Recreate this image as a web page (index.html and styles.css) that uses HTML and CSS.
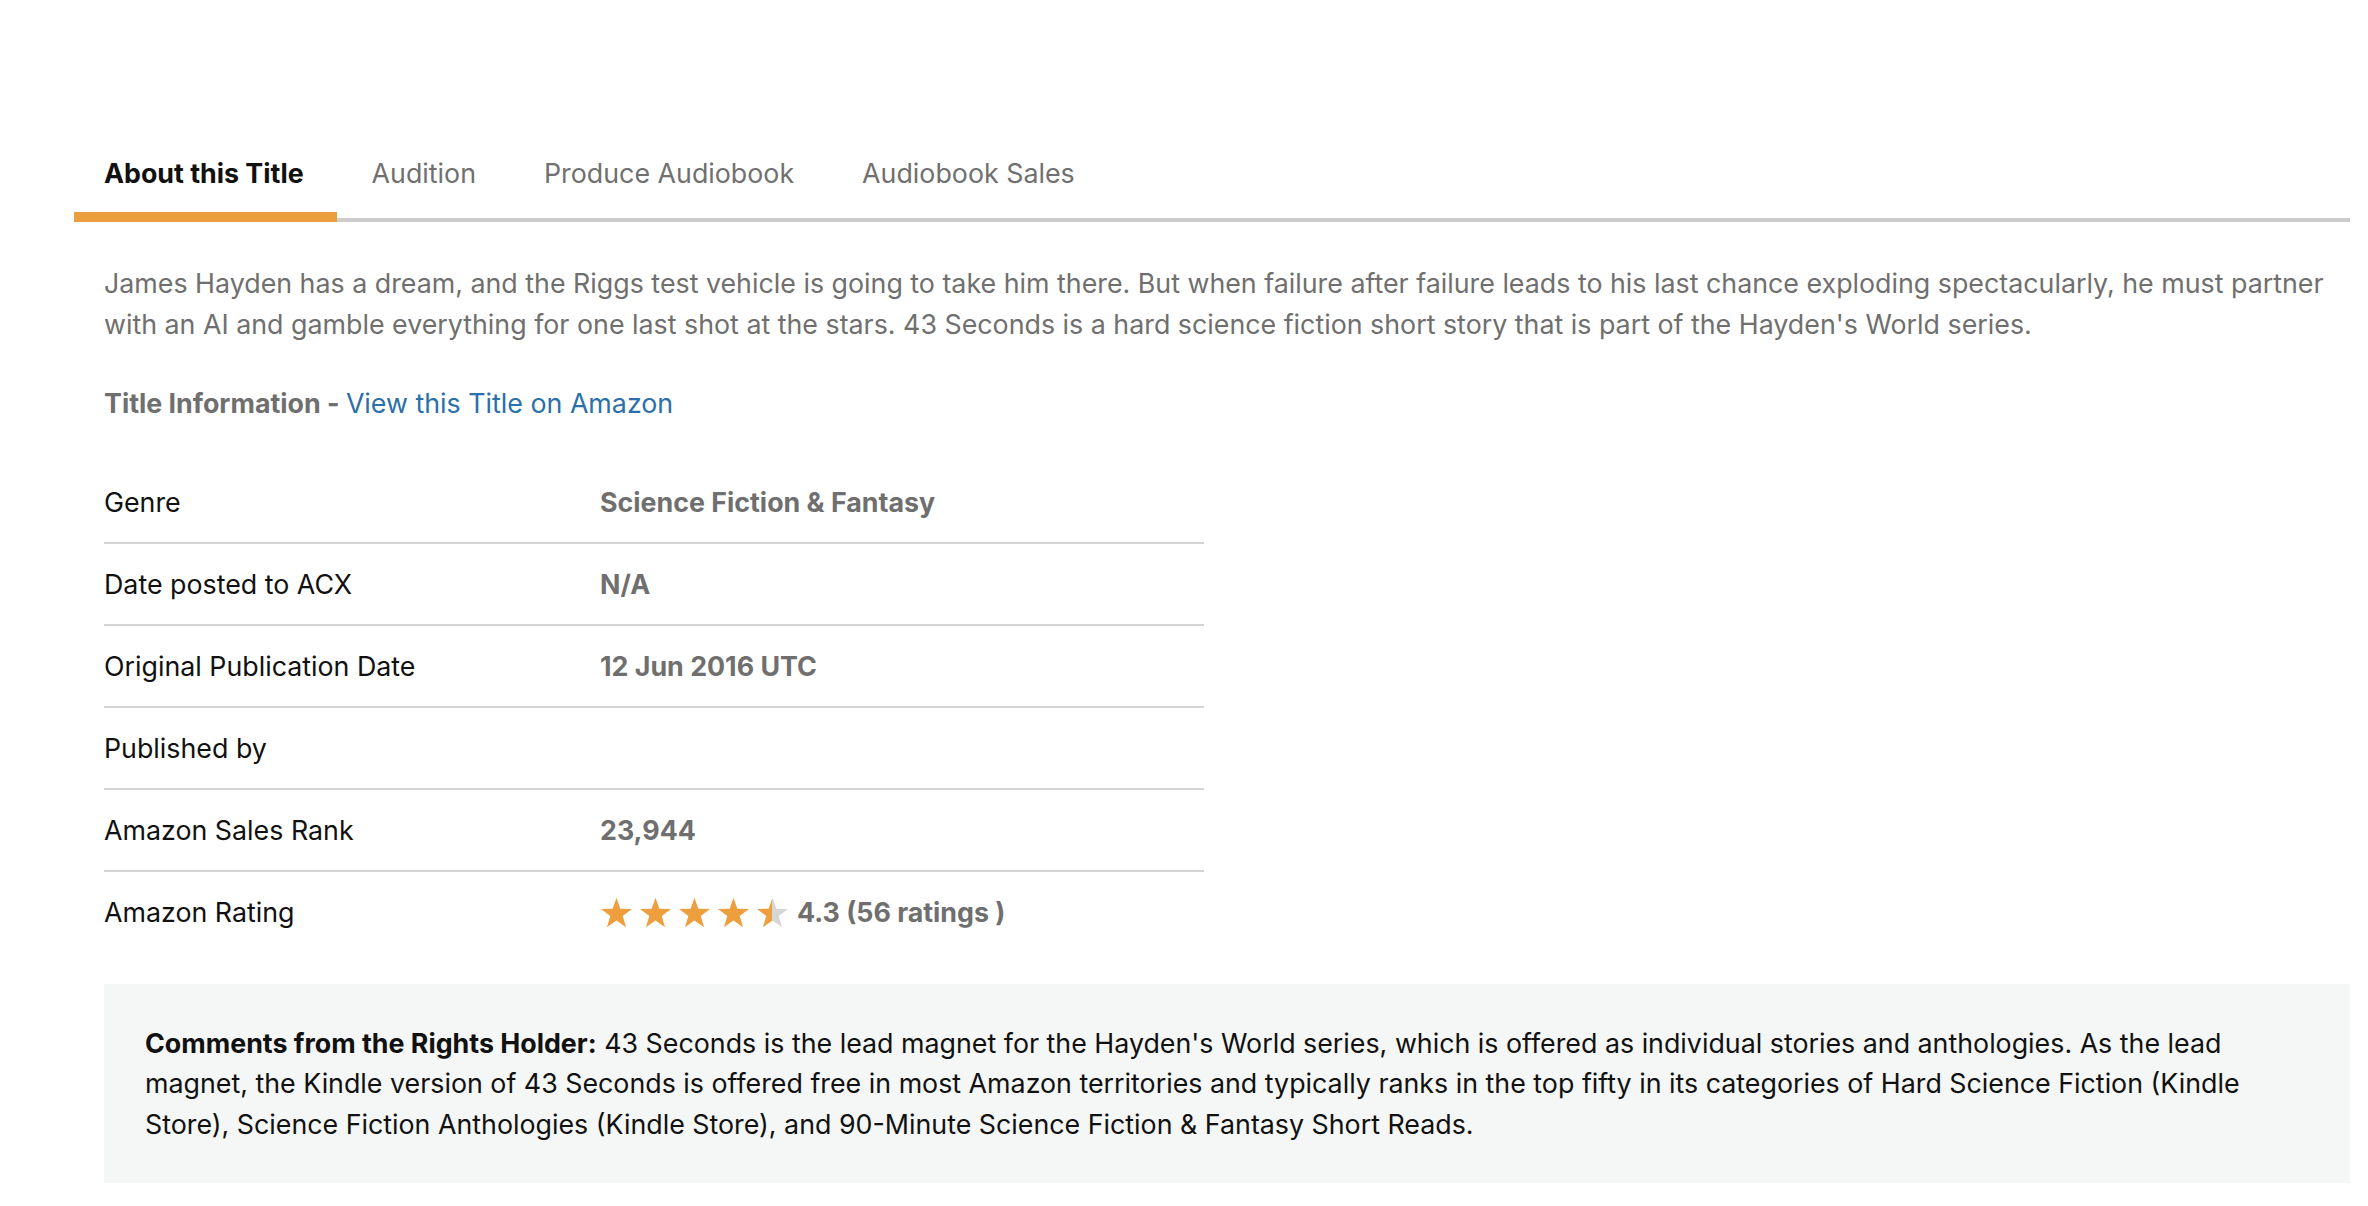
FILE: index.html
```html
<!DOCTYPE html>
<html lang="en">
<head>
<meta charset="utf-8">
<title>About this Title</title>
<link rel="stylesheet" href="styles.css">
</head>
<body>
<div class="page">
  <nav class="tabs">
    <a class="tab active" href="#">About this Title</a>
    <a class="tab" href="#">Audition</a>
    <a class="tab" href="#">Produce Audiobook</a>
    <a class="tab" href="#">Audiobook Sales</a>
  </nav>
  <div class="content">
    <p class="desc">James Hayden has a dream, and the Riggs test vehicle is going to take him there. But when failure after failure leads to his last chance exploding spectacularly, he must partner with an AI and gamble everything for one last shot at the stars. 43 Seconds is a hard science fiction short story that is part of the Hayden's World series.</p>
    <p class="info"><strong>Title Information - </strong><a href="#">View this Title on Amazon</a></p>
    <table class="details">
      <tr><td class="label">Genre</td><td class="value">Science Fiction &amp; Fantasy</td></tr>
      <tr><td class="label">Date posted to ACX</td><td class="value">N/A</td></tr>
      <tr><td class="label">Original Publication Date</td><td class="value">12 Jun 2016 UTC</td></tr>
      <tr><td class="label">Published by</td><td class="value"></td></tr>
      <tr><td class="label">Amazon Sales Rank</td><td class="value">23,944</td></tr>
      <tr><td class="label">Amazon Rating</td><td class="value">
        <div class="rating">
          <span class="stars">
            <svg class="star" viewBox="0 0 100 95"><polygon class="full" points="50,2 61.76,35.82 97.55,36.55 69.02,58.18 79.39,92.45 50,72 20.61,92.45 30.98,58.18 2.45,36.55 38.24,35.82"/></svg>
            <svg class="star" viewBox="0 0 100 95"><polygon class="full" points="50,2 61.76,35.82 97.55,36.55 69.02,58.18 79.39,92.45 50,72 20.61,92.45 30.98,58.18 2.45,36.55 38.24,35.82"/></svg>
            <svg class="star" viewBox="0 0 100 95"><polygon class="full" points="50,2 61.76,35.82 97.55,36.55 69.02,58.18 79.39,92.45 50,72 20.61,92.45 30.98,58.18 2.45,36.55 38.24,35.82"/></svg>
            <svg class="star" viewBox="0 0 100 95"><polygon class="full" points="50,2 61.76,35.82 97.55,36.55 69.02,58.18 79.39,92.45 50,72 20.61,92.45 30.98,58.18 2.45,36.55 38.24,35.82"/></svg>
            <svg class="star" viewBox="0 0 100 95"><defs><linearGradient id="half" x1="0" x2="1" y1="0" y2="0"><stop offset="0.5" stop-color="#ed9f3d"/><stop offset="0.5" stop-color="#d6d6d6"/></linearGradient></defs><polygon fill="url(#half)" points="50,2 61.76,35.82 97.55,36.55 69.02,58.18 79.39,92.45 50,72 20.61,92.45 30.98,58.18 2.45,36.55 38.24,35.82"/></svg>
          </span>
          <span class="score">4.3 (56 ratings )</span>
        </div>
      </td></tr>
    </table>
    <div class="comments"><p class="comments-text"><strong>Comments from the Rights Holder:</strong> 43 Seconds is the lead magnet for the Hayden's World series, which is offered as individual stories and anthologies. As the lead magnet, the Kindle version of 43 Seconds is offered free in most Amazon territories and typically ranks in the top fifty in its categories of Hard Science Fiction (Kindle Store), Science Fiction Anthologies (Kindle Store), and 90-Minute Science Fiction &amp; Fantasy Short Reads.</p></div>
  </div>
</div>
</body>
</html>
```

FILE: styles.css
```css
html, body {
  margin: 0;
  padding: 0;
  background: #ffffff;
}
body {
  font-family: "Inter", "Liberation Sans", sans-serif;
  font-size: 26.8px;
  line-height: 40.5px;
  color: #111111;
}
.page {
  padding: 122px 18px 0 74px;
}
.tabs {
  display: flex;
  border-bottom: 4px solid #cccccc;
}
.tab {
  display: block;
  padding: 31px 33px 19px 30px;
  line-height: 40px;
  margin-bottom: -4px;
  border-bottom: 10px solid transparent;
  color: #707070;
  text-decoration: none;
  margin-right: 5px;
}
.tab.active {
  color: #111111;
  font-weight: 700;
  border-bottom-color: #ec9e3c;
}
.content {
  padding-left: 30px;
}
.desc {
  margin: 41px 0 0;
  color: #6f6f6f;
}
.info {
  margin: 39px 0 0;
  color: #6f6f6f;
}
.info strong {
  font-weight: 700;
}
.info a {
  color: #2b70aa;
  text-decoration: none;
}
.details {
  margin-top: 38px;
  width: 1100px;
  border-collapse: collapse;
}
.details tr {
  border-bottom: 2px solid #d5d5d5;
}
.details tr:last-child {
  border-bottom: none;
}
.details td {
  padding: 20.5px 0 19px;
  height: 40.5px;
  vertical-align: middle;
}
.details .label {
  width: 496px;
  color: #111111;
}
.details .value {
  color: #6f6f6f;
  font-weight: 700;
}
.rating {
  display: flex;
  align-items: center;
  gap: 8px;
}
.stars {
  display: flex;
  gap: 6px;
}
.star {
  width: 33px;
  height: 31px;
  display: block;
}
.star .full {
  fill: #ed9f3d;
}
.comments {
  margin-top: 32px;
  background: #f5f6f6;
  padding: 39px 41px;
  color: #111111;
}
.comments-text {
  margin: 0;
}
.comments strong {
  font-weight: 700;
}
```
